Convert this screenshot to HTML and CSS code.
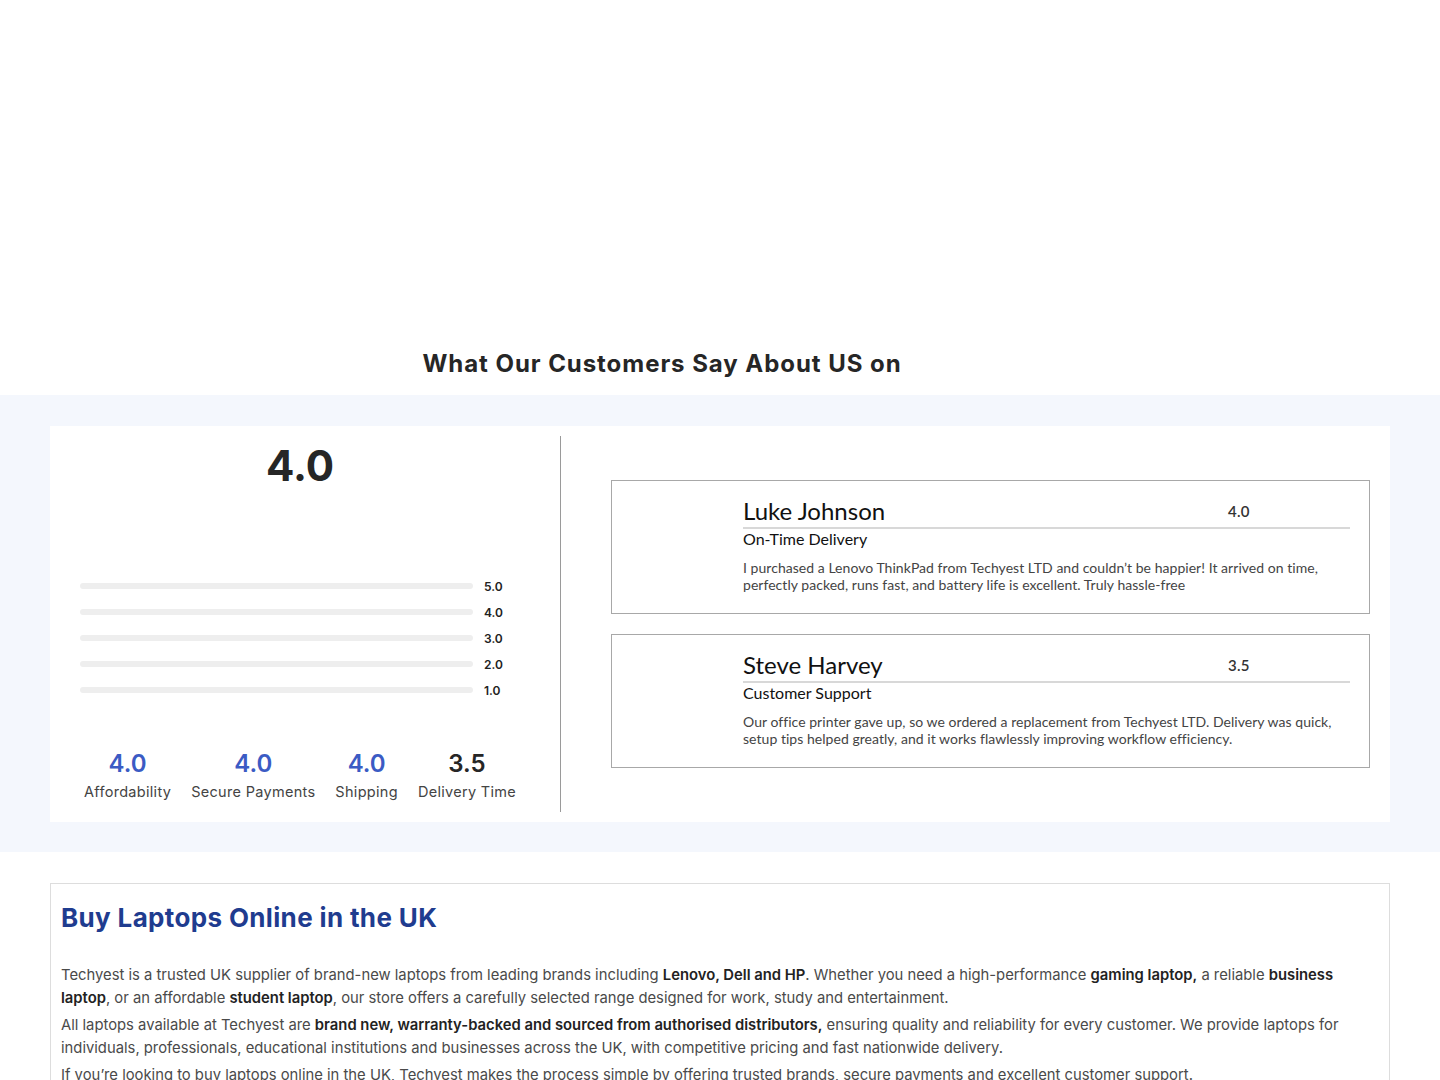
FILE: index.html
```html
<!DOCTYPE html>
<html lang="en">
<head>
<meta charset="utf-8">
<title>Techyest Reviews</title>
<link rel="stylesheet" href="styles.css">
</head>
<body>
<div class="hero-blank"></div>

<section class="reviews">
  <div class="reviews-title">
    <h2>What Our Customers Say About US on</h2>
    <span class="logo-slot"></span>
  </div>

  <div class="reviews-band">
    <div class="reviews-card">
      <div class="summary">
        <div class="summary-score">4.0</div>

        <div class="bars">
          <div class="bar-row"><span class="bar"></span><span class="bar-label">5.0</span></div>
          <div class="bar-row"><span class="bar"></span><span class="bar-label">4.0</span></div>
          <div class="bar-row"><span class="bar"></span><span class="bar-label">3.0</span></div>
          <div class="bar-row"><span class="bar"></span><span class="bar-label">2.0</span></div>
          <div class="bar-row"><span class="bar"></span><span class="bar-label">1.0</span></div>
        </div>

        <div class="stats">
          <div class="stat"><div class="stat-num blue">4.0</div><div class="stat-label">Affordability</div></div>
          <div class="stat"><div class="stat-num blue">4.0</div><div class="stat-label">Secure Payments</div></div>
          <div class="stat"><div class="stat-num blue">4.0</div><div class="stat-label">Shipping</div></div>
          <div class="stat"><div class="stat-num">3.5</div><div class="stat-label">Delivery Time</div></div>
        </div>
      </div>

      <div class="divider"></div>

      <div class="review-list">
        <article class="review">
          <div class="review-avatar"></div>
          <div class="review-body">
            <div class="review-head">
              <span class="review-name">Luke Johnson</span>
              <span class="review-rating">4.0</span>
            </div>
            <div class="review-topic">On-Time Delivery</div>
            <p class="review-text">I purchased a Lenovo ThinkPad from Techyest LTD and couldn’t be happier! It arrived on time, perfectly packed, runs fast, and battery life is excellent. Truly hassle-free</p>
          </div>
        </article>

        <article class="review">
          <div class="review-avatar"></div>
          <div class="review-body">
            <div class="review-head">
              <span class="review-name">Steve Harvey</span>
              <span class="review-rating">3.5</span>
            </div>
            <div class="review-topic">Customer Support</div>
            <p class="review-text">Our office printer gave up, so we ordered a replacement from Techyest LTD. Delivery was quick, setup tips helped greatly, and it works flawlessly improving workflow efficiency.</p>
          </div>
        </article>
      </div>
    </div>
  </div>
</section>

<section class="seo">
  <h2 class="seo-title">Buy Laptops Online in the UK</h2>
  <p>Techyest is a trusted UK supplier of brand-new laptops from leading brands including <b>Lenovo, Dell and HP</b>. Whether you need a high-performance <b>gaming laptop,</b> a reliable <b>business laptop</b>, or an affordable <b>student laptop</b>, our store offers a carefully selected range designed for work, study and entertainment.</p>
  <p>All laptops available at Techyest are <b>brand new, warranty-backed and sourced from authorised distributors,</b> ensuring quality and reliability for every customer. We provide laptops for individuals, professionals, educational institutions and businesses across the UK, with competitive pricing and fast nationwide delivery.</p>
  <p>If you’re looking to buy laptops online in the UK, Techyest makes the process simple by offering trusted brands, secure payments and excellent customer support.</p>
</section>
</body>
</html>
```

FILE: styles.css
```css
* { box-sizing: border-box; }

body {
  margin: 0;
  background: #ffffff;
  font-family: "Inter", "Noto Sans", sans-serif;
  color: #333;
}

.hero-blank { height: 340px; }

.reviews-title {
  display: flex;
  justify-content: center;
  align-items: center;
  gap: 16px;
  padding: 9px 0 16px;
}

.reviews-title h2 {
  margin: 0;
  font-size: 24px;
  line-height: 30px;
  font-weight: 700;
  letter-spacing: 0.95px;
  color: #262626;
}

.logo-slot { width: 100px; height: 30px; }

.reviews-band {
  background: #f4f7fd;
  padding: 31px 50px 30px;
}

.reviews-card {
  background: #ffffff;
  display: flex;
  padding: 10px 0;
}

.summary {
  width: 500px;
  padding: 0 30px 10px;
  display: flex;
  flex-direction: column;
}

.summary-score {
  margin-top: 3px;
  text-align: center;
  font-size: 42px;
  line-height: 53px;
  font-weight: 700;
  color: #262626;
}

.bars { margin-top: 81px; }

.bar-row {
  display: flex;
  align-items: center;
  gap: 11px;
  height: 26px;
}

.bar {
  width: 393px;
  height: 6px;
  border-radius: 3px;
  background: #eeeeee;
}

.bar-label {
  font-size: 12px;
  font-weight: 600;
  color: #222;
}

.stats {
  margin-top: 46px;
  display: flex;
  justify-content: center;
  gap: 20px;
}

.stat { text-align: center; }

.stat-num {
  font-size: 24px;
  line-height: 30px;
  font-weight: 600;
  color: #262626;
}

.stat-num.blue { color: #3b5bc4; }

.stat-label {
  margin-top: 3px;
  font-size: 14.5px;
  line-height: 20px;
  letter-spacing: 0.3px;
  color: #444;
}

.divider {
  width: 1px;
  margin-left: 10px;
  background: #9a9a9a;
}

.review-list {
  flex: 1;
  padding: 0 20px 0 50px;
  display: flex;
  flex-direction: column;
  justify-content: center;
  gap: 20px;
}

.review {
  display: flex;
  border: 1px solid #a8a8a8;
  padding: 15px 19px 20px 0;
  font-family: "Lato", "Noto Sans", sans-serif;
}

.review-avatar { width: 131px; flex: none; }

.review-body { flex: 1; }

.review-head {
  display: flex;
  align-items: center;
  border-bottom: 2px solid #d8d8d8;
  height: 33px;
  padding-bottom: 2px;
}

.review-name {
  flex: 1;
  font-size: 24px;
  line-height: 30px;
  color: #111;
}

.review-rating {
  width: 122px;
  font-size: 15px;
  font-weight: 600;
  letter-spacing: 0.3px;
  color: #333;
}

.review-topic {
  font-size: 16px;
  line-height: 20px;
  color: #111;
}

.review-text {
  margin: 11px 0 0;
  font-size: 14px;
  line-height: 16.5px;
  letter-spacing: 0.04px;
  color: #444;
  font-weight: 400;
}

.seo {
  margin: 31px 50px 0;
  border: 1px solid #dddddd;
  padding: 18px 10px 10px;
}

.seo-title {
  margin: 0 0 30px;
  font-size: 26px;
  line-height: 32px;
  font-weight: 700;
  letter-spacing: 0.35px;
  color: #1f3c8f;
}

.seo p {
  margin: 0 0 4px;
  font-size: 14.8px;
  line-height: 23px;
  color: #4a4a4a;
}

.seo b {
  font-weight: 600;
  color: #222;
}
```
